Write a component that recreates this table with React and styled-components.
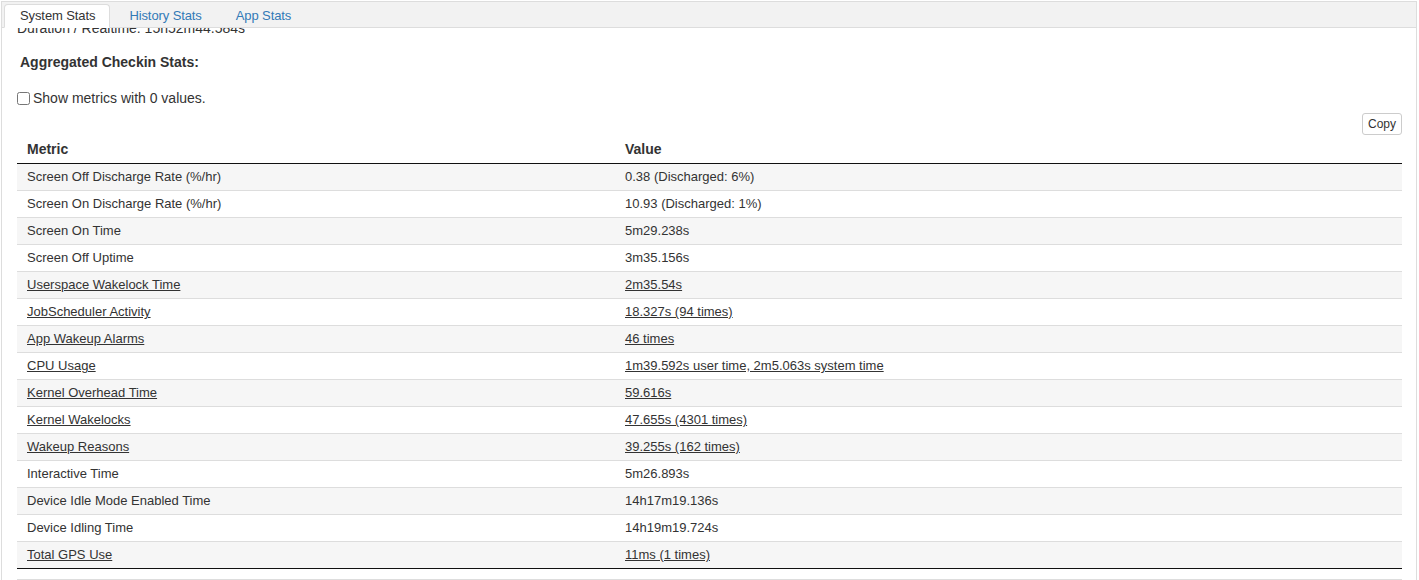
import React, { useState } from 'react';
import styled, { createGlobalStyle } from 'styled-components';

const rows = [
  { metric: 'Screen Off Discharge Rate (%/hr)', value: '0.38 (Discharged: 6%)' },
  { metric: 'Screen On Discharge Rate (%/hr)', value: '10.93 (Discharged: 1%)' },
  { metric: 'Screen On Time', value: '5m29.238s' },
  { metric: 'Screen Off Uptime', value: '3m35.156s' },
  { metric: 'Userspace Wakelock Time', value: '2m35.54s', link: true },
  { metric: 'JobScheduler Activity', value: '18.327s (94 times)', link: true },
  { metric: 'App Wakeup Alarms', value: '46 times', link: true },
  { metric: 'CPU Usage', value: '1m39.592s user time, 2m5.063s system time', link: true },
  { metric: 'Kernel Overhead Time', value: '59.616s', link: true },
  { metric: 'Kernel Wakelocks', value: '47.655s (4301 times)', link: true },
  { metric: 'Wakeup Reasons', value: '39.255s (162 times)', link: true },
  { metric: 'Interactive Time', value: '5m26.893s' },
  { metric: 'Device Idle Mode Enabled Time', value: '14h17m19.136s' },
  { metric: 'Device Idling Time', value: '14h19m19.724s' },
  { metric: 'Total GPS Use', value: '11ms (1 times)', link: true },
];

const tabs = ['System Stats', 'History Stats', 'App Stats'];

function App() {
  const [active, setActive] = useState(0);
  const [showZero, setShowZero] = useState(false);

  return (
    <>
      <GlobalStyle />
      <Panel>
        <TabBar>
          {tabs.map((t, i) => (
            <Tab key={t} active={i === active} onClick={() => setActive(i)}>
              {t}
            </Tab>
          ))}
        </TabBar>
        <Body>
          <Duration>Duration / Realtime: 15h52m44.584s</Duration>
          <Heading>Aggregated Checkin Stats:</Heading>
          <CheckRow>
            <input
              type="checkbox"
              checked={showZero}
              onChange={(e) => setShowZero(e.target.checked)}
            />
            Show metrics with 0 values.
          </CheckRow>
          <Toolbar>
            <CopyButton>Copy</CopyButton>
          </Toolbar>
          <StatsTable>
            <thead>
              <tr>
                <th>Metric</th>
                <th>Value</th>
              </tr>
            </thead>
            <tbody>
              {rows.map((r) => (
                <tr key={r.metric}>
                  <td>{r.link ? <a href="#">{r.metric}</a> : r.metric}</td>
                  <td>{r.link ? <a href="#">{r.value}</a> : r.value}</td>
                </tr>
              ))}
            </tbody>
          </StatsTable>
          <NextSection />
        </Body>
      </Panel>
    </>
  );
}

export default App;

const GlobalStyle = createGlobalStyle`
  body {
    margin: 0;
    font-family: "Liberation Sans", Arial, Helvetica, sans-serif;
    color: #333;
    background: #fff;
    overflow: hidden;
  }
`;

const Panel = styled.div`
  margin: 1px 2px 0 1px;
  height: 579px;
  border: 1px solid #ddd;
  border-bottom: none;
  display: flex;
  flex-direction: column;
  overflow: hidden;
`;

const TabBar = styled.div`
  display: flex;
  gap: 3px;
  padding: 2px 2px 0;
  background: #f2f2f2;
  border-bottom: 1px solid #ddd;
`;

const Tab = styled.div`
  padding: 3px 14px 3px 15px;
  font-size: 13px;
  line-height: 16px;
  margin-bottom: -1px;
  cursor: pointer;
  border: 1px solid ${(p) => (p.active ? '#ddd' : 'transparent')};
  border-bottom-color: transparent;
  border-radius: 4px 4px 0 0;
  background: ${(p) => (p.active ? '#fff' : 'transparent')};
  color: ${(p) => (p.active ? '#333' : '#337ab7')};
  letter-spacing: -0.1px;
`;

const Body = styled.div`
  flex: 1;
  overflow: hidden;
  padding: 0 14px 0 15px;
`;

const Duration = styled.div`
  margin-top: -10px;
  font-size: 14px;
  line-height: 20px;
`;

const Heading = styled.div`
  margin-top: 14px;
  padding-left: 3px;
  font-size: 14px;
  font-weight: bold;
  line-height: 20px;
`;

const CheckRow = styled.label`
  display: flex;
  align-items: center;
  margin-top: 16px;
  font-size: 14px;
  line-height: 20px;

  input {
    width: 13px;
    height: 13px;
    margin: 0 3px 0 0;
  }
`;

const Toolbar = styled.div`
  display: flex;
  justify-content: flex-end;
  margin-top: 5px;
`;

const CopyButton = styled.button`
  height: 22px;
  padding: 0 5px;
  font-family: inherit;
  font-size: 12px;
  color: #333;
  background: #fff;
  border: 1px solid #ccc;
  border-radius: 3px;
`;

const StatsTable = styled.table`
  width: 100%;
  border-collapse: collapse;
  font-size: 13px;

  th {
    text-align: left;
    font-size: 14px;
    font-weight: bold;
    line-height: 18px;
    padding: 5px 10px;
    border-bottom: 1px solid #111;
  }

  th:first-child {
    width: 578px;
  }

  td {
    line-height: 18px;
    padding: 4px 10px;
    border-bottom: 1px solid #ddd;
  }

  tbody tr:nth-child(odd) td {
    background: #f6f6f6;
  }

  tbody tr:last-child td {
    border-bottom-color: #111;
  }

  a {
    color: #333;
    text-decoration: underline;
  }
`;

const NextSection = styled.div`
  margin-top: 10px;
  border-top: 1px solid #ddd;
  height: 20px;
`;
